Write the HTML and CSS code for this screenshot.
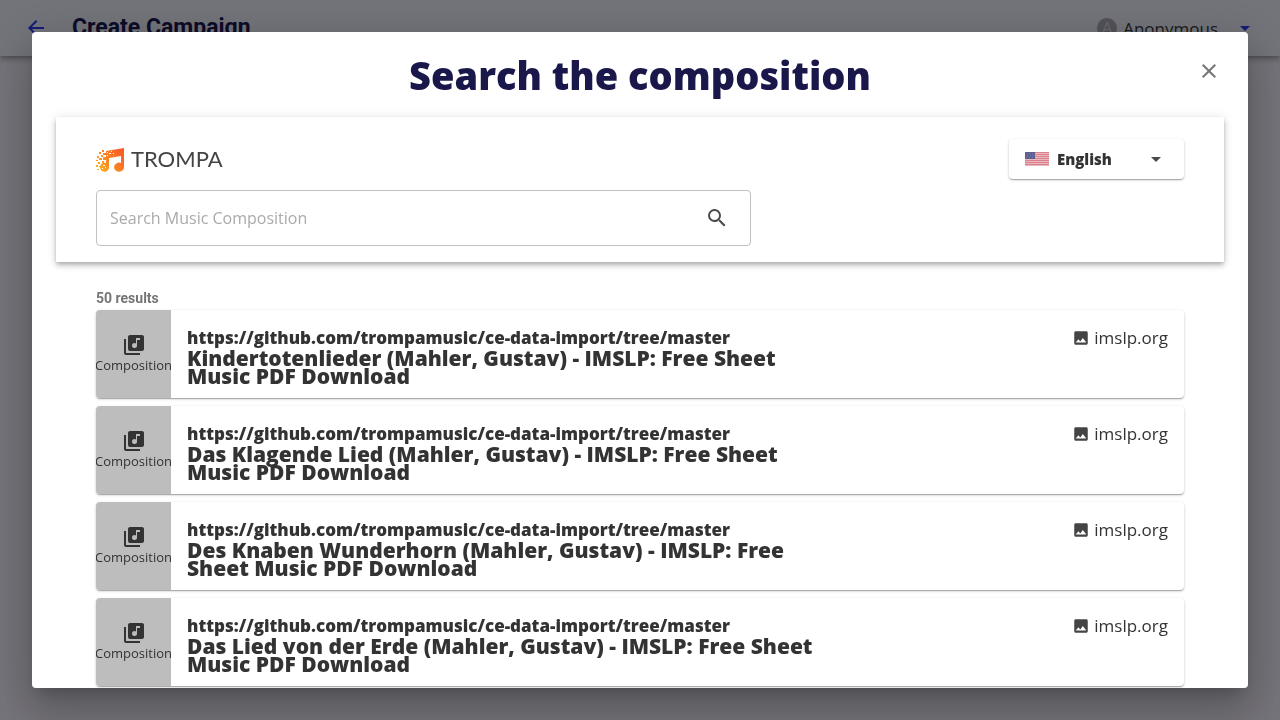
FILE: index.html
```html
<!DOCTYPE html>
<html lang="en">
<head>
<meta charset="utf-8">
<title>Create Campaign</title>
<link rel="stylesheet" href="styles.css">
</head>
<body>
<header class="appbar">
  <button class="back" aria-label="Back"><svg class="icon" viewBox="0 0 24 24"><path d="M20 11H7.830l5.590-5.590L12 4l-8 8 8 8 1.410-1.410L7.830 13H20v-2z"/></svg></button>
  <h1 class="appbar-title">Create Campaign</h1>
  <button class="user"><span class="avatar">A</span><span class="user-name">Anonymous</span><svg class="icon" viewBox="0 0 24 24"><path d="M7 10l5 5 5-5z"/></svg></button>
</header>
<div class="overlay">
  <section class="dialog" role="dialog" aria-labelledby="dialog-title">
    <div class="dialog-head">
      <h2 class="dialog-title" id="dialog-title">Search the composition</h2>
      <button class="close" aria-label="Close"><svg class="icon" viewBox="0 0 24 24"><path d="M19 6.410L17.590 5 12 10.590 6.410 5 5 6.410 10.590 12 5 17.590 6.410 19 12 13.410 17.590 19 19 17.590 13.410 12z"/></svg></button>
    </div>
    <div class="search-panel">
      <div class="panel-top">
        <div class="brand">
          <svg class="brand-mark" viewBox="0 0 29 26">
            <defs><linearGradient id="flame" gradientUnits="userSpaceOnUse" x1="2" y1="24" x2="26" y2="4"><stop offset="0" stop-color="#fdb01c"/><stop offset=".4" stop-color="#fb8a22"/><stop offset="1" stop-color="#f95a28"/></linearGradient></defs>
            <g fill="url(#flame)">
              <path d="M10 5L28 2V20.500A5 4.500 0 1 1 25 17V10L13 12V21A4.500 4.500 0 1 1 10 17z"/>
              <path d="M6 4h2v2H6zM3 6h2v2H3zM7 7h3v2H7zM5 9h2v2H5zM1 10h2v2H1zM7 11h3v3H7zM3 12h3v2H3zM0 14h2v1H0zM6 15h2v2H6zM2 16h2v2H2zM0 19h2v2H0zM3 20h2v1H3zM1 23h2v1H1z"/>
            </g>
            <path fill="#fff" d="M11 6h1v1h-1zM13 7h2v1h-2zM11 9h1v1h-1zM15 5h1v1h-1zM17 7h1v1h-1zM7 19h2v1H7zM9 21h1v1H9zM6 22h1v1H6z"/>
          </svg>
          <span class="brand-name">TROMPA</span>
        </div>
        <label class="language">
          <svg class="flag" viewBox="0 0 24 14">
            <path fill="#eab9bf" d="M0 0h24v14H0z"/>
            <path fill="#d9808c" d="M0 0h24v1H0zM0 2h24v1H0zM0 4h24v1H0zM0 6h24v1H0zM0 8h24v1H0zM0 10h24v1H0zM0 12h24v1H0z"/>
            <path fill="#5e5f91" d="M0 0h10v7H0z"/>
            <path fill="#7779a4" d="M1 1h1v1H1zM4 1h1v1H4zM7 1h1v1H7zM2 3h1v1H2zM5 3h1v1H5zM8 3h1v1H8zM1 5h1v1H1zM4 5h1v1H4zM7 5h1v1H7z"/>
          </svg>
          <select class="language-select" aria-label="Language"><option>English</option></select>
          <svg class="icon" viewBox="0 0 24 24"><path d="M7 10l5 5 5-5z"/></svg>
        </label>
      </div>
      <div class="search-box">
        <input class="search-input" type="text" placeholder="Search Music Composition" aria-label="Search Music Composition">
        <button class="search-button" aria-label="Search"><svg class="icon" viewBox="0 0 24 24"><path d="M15.500 14h-.79l-.28-.27A6.471 6.471 0 0 0 16 9.500 6.500 6.500 0 1 0 9.500 16c1.610 0 3.090-.59 4.230-1.570l.27.28v.79l5 4.990L20.490 19l-4.990-5zm-6 0C7.010 14 5 11.990 5 9.500S7.010 5 9.500 5 14 7.010 14 9.500 11.990 14 9.500 14z"/></svg></button>
      </div>
    </div>
    <div class="results">
      <p class="count">50 results</p>
      <article class="card">
        <div class="kind"><svg class="icon" viewBox="0 0 24 24"><path d="M20 2H8c-1.100 0-2 .9-2 2v12c0 1.100.9 2 2 2h12c1.100 0 2-.9 2-2V4c0-1.100-.9-2-2-2zm-2 5h-3v5.500a2.500 2.500 0 1 1-2.500-2.500c.57 0 1.080.19 1.500.51V5h4v2zM4 6H2v14c0 1.100.9 2 2 2h14v-2H4V6z"/></svg><span>Composition</span></div>
        <div class="info"><p class="source">https://github.com/trompamusic/ce-data-import/tree/master</p><h3 class="name">Kindertotenlieder (Mahler, Gustav) - IMSLP: Free Sheet Music PDF Download</h3></div>
        <div class="site"><svg class="site-icon" viewBox="0 0 24 24"><path d="M21 19V5c0-1.100-.9-2-2-2H5c-1.100 0-2 .9-2 2v14c0 1.100.9 2 2 2h14c1.100 0 2-.9 2-2zM8.500 13.500l2.500 3.010L14.500 12l4.500 6H5l3.500-4.500z"/></svg>imslp.org</div>
      </article>
      <article class="card">
        <div class="kind"><svg class="icon" viewBox="0 0 24 24"><path d="M20 2H8c-1.100 0-2 .9-2 2v12c0 1.100.9 2 2 2h12c1.100 0 2-.9 2-2V4c0-1.100-.9-2-2-2zm-2 5h-3v5.500a2.500 2.500 0 1 1-2.500-2.500c.57 0 1.080.19 1.500.51V5h4v2zM4 6H2v14c0 1.100.9 2 2 2h14v-2H4V6z"/></svg><span>Composition</span></div>
        <div class="info"><p class="source">https://github.com/trompamusic/ce-data-import/tree/master</p><h3 class="name">Das Klagende Lied (Mahler, Gustav) - IMSLP: Free Sheet Music PDF Download</h3></div>
        <div class="site"><svg class="site-icon" viewBox="0 0 24 24"><path d="M21 19V5c0-1.100-.9-2-2-2H5c-1.100 0-2 .9-2 2v14c0 1.100.9 2 2 2h14c1.100 0 2-.9 2-2zM8.500 13.500l2.500 3.010L14.500 12l4.500 6H5l3.500-4.500z"/></svg>imslp.org</div>
      </article>
      <article class="card">
        <div class="kind"><svg class="icon" viewBox="0 0 24 24"><path d="M20 2H8c-1.100 0-2 .9-2 2v12c0 1.100.9 2 2 2h12c1.100 0 2-.9 2-2V4c0-1.100-.9-2-2-2zm-2 5h-3v5.500a2.500 2.500 0 1 1-2.500-2.500c.57 0 1.080.19 1.500.51V5h4v2zM4 6H2v14c0 1.100.9 2 2 2h14v-2H4V6z"/></svg><span>Composition</span></div>
        <div class="info"><p class="source">https://github.com/trompamusic/ce-data-import/tree/master</p><h3 class="name">Des Knaben Wunderhorn (Mahler, Gustav) - IMSLP: Free Sheet Music PDF Download</h3></div>
        <div class="site"><svg class="site-icon" viewBox="0 0 24 24"><path d="M21 19V5c0-1.100-.9-2-2-2H5c-1.100 0-2 .9-2 2v14c0 1.100.9 2 2 2h14c1.100 0 2-.9 2-2zM8.500 13.500l2.500 3.010L14.500 12l4.500 6H5l3.500-4.500z"/></svg>imslp.org</div>
      </article>
      <article class="card">
        <div class="kind"><svg class="icon" viewBox="0 0 24 24"><path d="M20 2H8c-1.100 0-2 .9-2 2v12c0 1.100.9 2 2 2h12c1.100 0 2-.9 2-2V4c0-1.100-.9-2-2-2zm-2 5h-3v5.500a2.500 2.500 0 1 1-2.500-2.500c.57 0 1.080.19 1.500.51V5h4v2zM4 6H2v14c0 1.100.9 2 2 2h14v-2H4V6z"/></svg><span>Composition</span></div>
        <div class="info"><p class="source">https://github.com/trompamusic/ce-data-import/tree/master</p><h3 class="name">Das Lied von der Erde (Mahler, Gustav) - IMSLP: Free Sheet Music PDF Download</h3></div>
        <div class="site"><svg class="site-icon" viewBox="0 0 24 24"><path d="M21 19V5c0-1.100-.9-2-2-2H5c-1.100 0-2 .9-2 2v14c0 1.100.9 2 2 2h14c1.100 0 2-.9 2-2zM8.500 13.500l2.500 3.010L14.500 12l4.500 6H5l3.500-4.500z"/></svg>imslp.org</div>
      </article>
    </div>
  </section>
</div>
</body>
</html>
```
FILE: styles.css
```css
* { box-sizing: border-box; }
body { margin: 0; min-height: 100vh; background: #e9e6f2; color: #333; font-family: "Open Sans", sans-serif; overflow: hidden; }
h1, h2, h3, p { margin: 0; }
button { padding: 0; border: 0; background: none; color: inherit; font: inherit; cursor: pointer; }
.icon { display: block; width: 24px; height: 24px; fill: currentColor; }

.appbar { display: flex; align-items: center; height: 56px; padding: 0 23px 0 24px; background: #e4e8f4; box-shadow: 0 2px 4px -1px rgba(0,0,0,.2), 0 4px 5px rgba(0,0,0,.14), 0 1px 10px rgba(0,0,0,.12); }
.back { color: #2a35f0; }
.appbar-title { flex: 1; margin-left: 24px; color: #1a174f; font: 700 23px/32px Roboto, sans-serif; }
.user { display: flex; align-items: center; font-size: 17px; color: #2a35f0; }
.avatar { width: 20px; height: 20px; border-radius: 50%; background: #a5a3b0; color: #d0ced8; font-size: 17px; line-height: 20px; text-align: center; }
.user-name { margin: 0 15px 0 6px; color: #333; }

.overlay { position: fixed; inset: 0; display: flex; padding: 32px; background: rgba(0,0,0,.5); }
.dialog { flex: 1; overflow: hidden; border-radius: 4px; background: #fff; box-shadow: 0 11px 15px -7px rgba(0,0,0,.2), 0 24px 38px 3px rgba(0,0,0,.14), 0 9px 46px 8px rgba(0,0,0,.12); }
.dialog-head { display: grid; grid-template-columns: 1fr auto 1fr; align-items: center; height: 85px; padding: 0 27px; }
.dialog-title { grid-column: 2; color: #1a174a; font-size: 38px; font-weight: 800; line-height: 48px; }
.close { justify-self: end; padding-bottom: 8px; color: #757575; }

.search-panel { margin: 0 24px; padding: 22px 40px 16px; background: #fff; box-shadow: 0 2px 4px -1px rgba(0,0,0,.2), 0 4px 5px rgba(0,0,0,.14), 0 1px 10px rgba(0,0,0,.12); }
.panel-top { display: flex; align-items: center; justify-content: space-between; margin-bottom: 11px; }
.brand { display: flex; align-items: center; gap: 6px; }
.brand-mark { width: 29px; height: 26px; }
.brand-name { color: #444; font: 400 22px/26px Lato, sans-serif; }
.language { display: flex; align-items: center; width: 175px; height: 40px; padding: 0 16px; border-radius: 4px; background: #fff; color: #4a4a4a; box-shadow: 0 1px 3px rgba(0,0,0,.2), 0 1px 1px rgba(0,0,0,.14), 0 2px 1px -1px rgba(0,0,0,.12); }
.flag { width: 24px; height: 14px; margin-right: 8px; }
.language-select { flex: 1; min-width: 0; padding: 0; border: 0; appearance: none; background: none; color: #333; font: 800 15px/22px "Open Sans", sans-serif; }
.search-box { display: flex; align-items: center; width: 100%; max-width: 655px; height: 56px; padding: 0 21px 0 13px; border: 1px solid #c1c1c1; border-radius: 4px; }
.search-input { flex: 1; min-width: 0; padding: 0; border: 0; outline: 0; background: none; font: 400 16px/24px "Open Sans", sans-serif; color: #333; }
.search-input::placeholder { color: #aaa; opacity: 1; }
.search-button { color: #4a4a4a; }

.results { display: grid; gap: 8px; padding: 28px 64px 24px; }
.count { margin-bottom: -4px; color: #757575; font: 700 14px/16px Roboto, sans-serif; }
.card { display: flex; min-height: 88px; overflow: hidden; border-radius: 4px; background: #fff; box-shadow: 0 1px 3px rgba(0,0,0,.2), 0 1px 1px rgba(0,0,0,.14), 0 2px 1px -1px rgba(0,0,0,.12); }
.kind { display: flex; flex: none; flex-direction: column; align-items: center; justify-content: center; width: 75px; padding-bottom: 2px; background: #bdbdbd; font-size: 13px; line-height: 16px; }
.info { flex: 0 1 664px; padding: 17px 16px 0; }
.source { font-size: 17px; font-weight: 800; line-height: 22px; }
.name { font-size: 21px; font-weight: 800; line-height: 18px; }
.site { display: flex; align-items: center; align-self: flex-start; gap: 4px; margin: 16px 16px 0 auto; font-size: 17px; line-height: 24px; }
.site-icon { width: 18px; height: 18px; fill: #444; }
```
